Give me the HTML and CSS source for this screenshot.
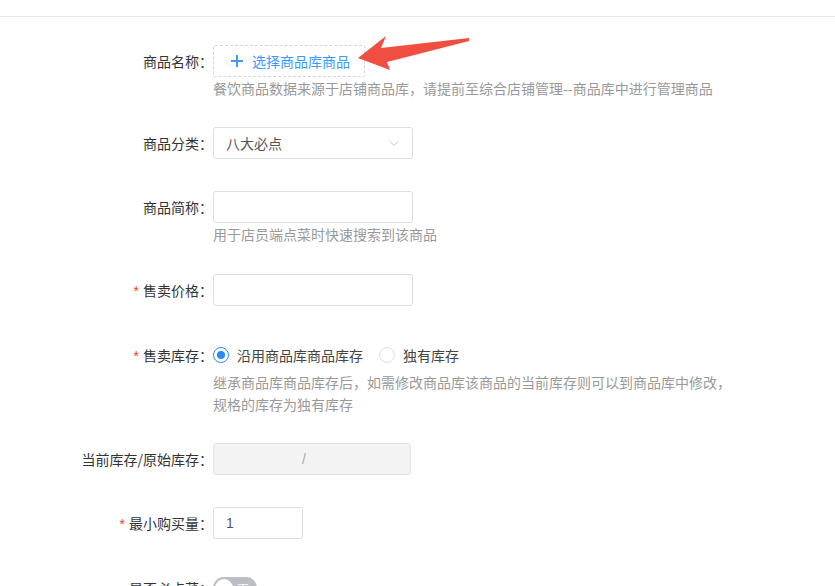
FILE: index.html
```html
<html lang="zh-CN">
<head>
    <meta charset="UTF-8">
    <meta name="viewport" content="width=device-width, initial-scale=1.0">
    <title>编辑商品</title>
    <link rel="stylesheet" href="styles.css">
</head>
<body>
    <div class="topbar"></div>
    <div class="form">
        <div class="form-item has-help">
            <label class="label">商品名称：</label>
            <div class="content">
                <div class="pick-btn">
                    <svg class="plus" width="12" height="12" viewBox="0 0 12 12"><path d="M6 0 V12 M0 6 H12" stroke="#3a9bfc" stroke-width="2"/></svg>
                    选择商品库商品
                </div>
                <div class="help">餐饮商品数据来源于店铺商品库，请提前至综合店铺管理--商品库中进行管理商品</div>
            </div>
        </div>

        <div class="form-item">
            <label class="label">商品分类：</label>
            <div class="content">
                <div class="select">
                    <span>八大必点</span>
                    <svg class="chevron" width="12" height="12" viewBox="0 0 12 12"><path d="M1.5 4 L6 8.5 L10.5 4" fill="none" stroke="#c0c4cc" stroke-width="1"/></svg>
                </div>
            </div>
        </div>

        <div class="form-item has-help wide-gap">
            <label class="label">商品简称：</label>
            <div class="content">
                <div class="input"></div>
                <div class="help">用于店员端点菜时快速搜索到该商品</div>
            </div>
        </div>

        <div class="form-item">
            <label class="label"><span class="req">*</span>售卖价格：</label>
            <div class="content">
                <div class="input"></div>
            </div>
        </div>

        <div class="form-item has-help">
            <label class="label"><span class="req">*</span>售卖库存：</label>
            <div class="content">
                <div class="radios">
                    <span class="radio checked"><i class="dot"></i>沿用商品库商品库存</span>
                    <span class="radio"><i class="dot"></i>独有库存</span>
                </div>
                <div class="help">继承商品库商品库存后，如需修改商品库该商品的当前库存则可以到商品库中修改，<br>规格的库存为独有库存</div>
            </div>
        </div>

        <div class="form-item">
            <label class="label">当前库存/原始库存：</label>
            <div class="content">
                <div class="input disabled">/</div>
            </div>
        </div>

        <div class="form-item">
            <label class="label"><span class="req">*</span>最小购买量：</label>
            <div class="content">
                <div class="input small">1</div>
            </div>
        </div>

        <div class="form-item">
            <label class="label">是否必点菜：</label>
            <div class="content">
                <div class="switch"><i class="knob"></i><span>否</span></div>
            </div>
        </div>
    </div>

    <svg class="arrow" width="835" height="100" viewBox="0 0 835 100">
        <polygon points="358,58 386,36 381,48 469,38 469,41 387,62 390,70" fill="#f04e40"/>
    </svg>
</body>
</html>
```

FILE: styles.css
```css
body {
    margin: 0;
    background-color: #fff;
    font-family: "Noto Sans CJK SC", "Liberation Sans", sans-serif;
    font-size: 14px;
    color: #333;
}

.topbar {
    height: 16px;
    border-bottom: 1px solid #e8e8e8;
}

.form {
    padding-top: 28px;
}

.form-item {
    display: flex;
    margin-bottom: 32px;
}

.form-item.has-help {
    margin-bottom: 28px;
}

.form-item.wide-gap {
    margin-bottom: 29px;
}

.label {
    width: 213px;
    flex-shrink: 0;
    text-align: right;
    line-height: 32px;
    color: #333;
}

.req {
    color: #ed3f14;
    margin-right: 4px;
    font-family: "Liberation Sans", sans-serif;
}

.content {
    flex: 1;
}

.help {
    color: #999;
    line-height: 22px;
}

.pick-btn {
    display: flex;
    align-items: center;
    box-sizing: border-box;
    width: 152px;
    height: 32px;
    padding-left: 17px;
    border: 1px dashed #d4d4d4;
    border-radius: 2px;
    color: #3a9bfc;
}

.plus {
    margin-right: 9px;
}

.select,
.input {
    display: flex;
    align-items: center;
    box-sizing: border-box;
    width: 200px;
    height: 32px;
    padding: 0 12px;
    border: 1px solid #dcdee2;
    border-radius: 3px;
    color: #555;
}

.select {
    justify-content: space-between;
}

.input.disabled {
    width: 198px;
    padding: 0 16px 0 0;
    justify-content: center;
    background-color: #f3f3f3;
    color: #aaa;
    font-family: "Liberation Sans", sans-serif;
}

.input.small {
    width: 90px;
    font-family: "Liberation Sans", sans-serif;
    color: #555;
}

.radios {
    display: flex;
    align-items: center;
    height: 32px;
    gap: 16px;
    color: #444;
}

.radio {
    display: flex;
    align-items: center;
}

.dot {
    box-sizing: border-box;
    width: 16px;
    height: 16px;
    margin-right: 8px;
    border: 1px solid #dcdee2;
    border-radius: 50%;
    position: relative;
}

.radio.checked .dot {
    border-color: #2d8cf0;
}

.radio.checked .dot::after {
    content: "";
    position: absolute;
    left: 3px;
    top: 3px;
    width: 8px;
    height: 8px;
    border-radius: 50%;
    background-color: #2d8cf0;
}

.switch {
    display: flex;
    align-items: center;
    box-sizing: border-box;
    width: 44px;
    height: 22px;
    margin-top: 5px;
    padding: 0 2px;
    border-radius: 11px;
    background-color: #bbbec4;
    color: #fff;
    font-size: 12px;
}

.knob {
    width: 18px;
    height: 18px;
    border-radius: 50%;
    background-color: #fff;
    margin-right: 4px;
}

.arrow {
    position: absolute;
    left: 0;
    top: 0;
}
```
